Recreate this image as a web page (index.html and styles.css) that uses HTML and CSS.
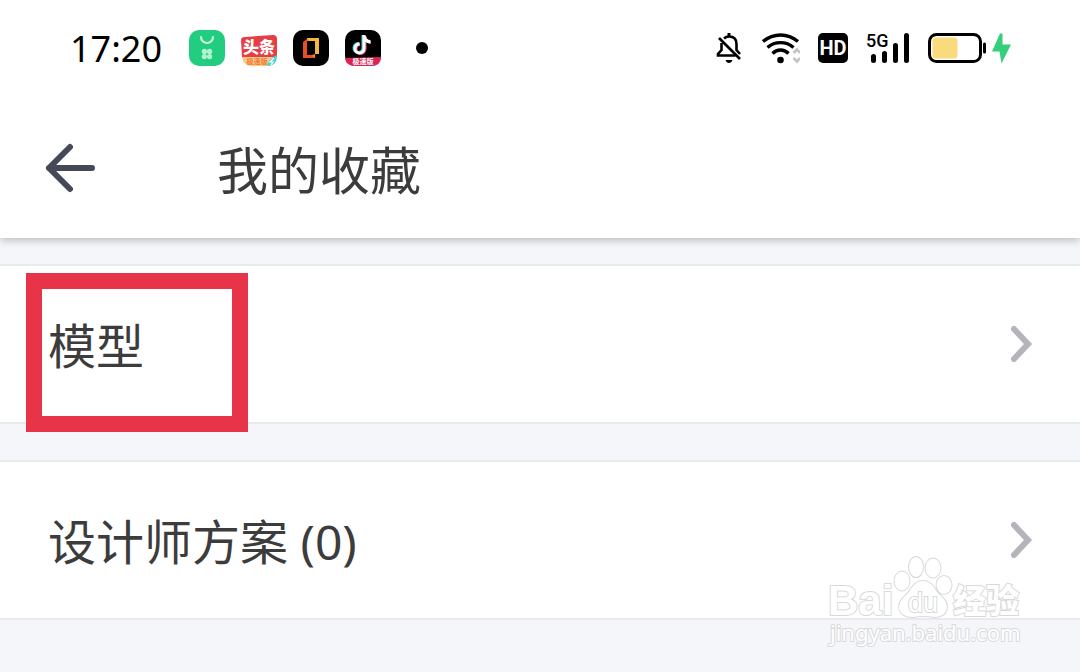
FILE: index.html
```html
<!DOCTYPE html>
<html lang="zh-CN">
<head>
  <meta charset="UTF-8">
  <meta name="viewport" content="width=device-width, initial-scale=1">
  <title>我的收藏</title>
  <link rel="stylesheet" href="styles.css">
</head>
<body>

  <!-- 状态栏 -->
  <div class="status-bar">
    <span class="time">17:20</span>
    <div class="apps">
      <svg width="36" height="36" viewBox="0 0 36 36">
        <rect width="36" height="36" rx="10" fill="#22cd80"/>
        <path d="M12 7a6 6 0 0 0 12 0" fill="none" stroke="#c6f7dc" stroke-width="2.2" stroke-linecap="round"/>
        <g fill="#b5f3d0">
          <circle cx="15.4" cy="21.4" r="2.6"/><circle cx="20.6" cy="21.4" r="2.6"/>
          <circle cx="15.4" cy="26.6" r="2.6"/><circle cx="20.6" cy="26.6" r="2.6"/>
        </g>
      </svg>
      <svg width="36" height="36" viewBox="0 0 36 36">
        <path d="M0 10Q0 7 4 7L32 5Q36 5 36 9V27H1Z" fill="#e63e45"/>
        <path d="M1 27H36Q35 36 26 36H11Q2 36 1 27Z" fill="#fcc887"/>
        <path d="M36 25Q36 36 26 36Q27 29 36 25Z" fill="#43d5d3"/>
        <path d="M33 28L29 32H32L30 35" fill="none" stroke="#fff" stroke-width="1.2"/>
        <text x="18" y="23" class="app-name">头条</text>
        <text x="16" y="34" class="app-tag tag-orange">极速版</text>
      </svg>
      <svg width="36" height="36" viewBox="0 0 36 36">
        <rect width="36" height="36" rx="10" fill="#000"/>
        <path d="M14 8H26V24H22V11H14Z" fill="#f4b63d"/>
        <path d="M10 12L14 9V25H22V28H10Z" fill="#e84f22"/>
        <path d="M14 8L17 11H14ZM22 24V28L19 25Z" fill="#f58a2e"/>
      </svg>
      <svg width="36" height="36" viewBox="0 0 36 36">
        <rect width="36" height="36" rx="10" fill="#000"/>
        <path d="M0 28L36 27Q36 36 26 36H10Q1 36 0 28Z" fill="#dc2454"/>
        <g fill="none" stroke-width="3">
          <path d="M18 5V18A4.500 4.500 0 1 1 14 13.500M18 6Q20 11 25 11.500" stroke="#36d9d5"/>
          <path d="M20 6V19A4.500 4.500 0 1 1 15 14.500M20 7Q21 12 26 12.500" stroke="#e94b72"/>
          <path d="M19 5V18.500A4.500 4.500 0 1 1 14.500 14M19 6Q20.500 11.500 25.500 12" stroke="#fff"/>
        </g>
        <text x="18" y="34" class="app-tag tag-white">极速版</text>
      </svg>
    </div>
    <span class="more-dot"></span>

    <div class="indicators">
      <svg width="26" height="32" viewBox="0 0 26 32">
        <g fill="none" stroke="#000" stroke-width="2.600">
          <path d="M8 6.500Q10 4.500 13 4.500Q20.500 4.500 20.500 12V18L24 22M5.500 11V18L2 22V23.500H19.500"/>
          <path d="M3 6L24 27"/>
        </g>
        <path d="M11.500 1H14.500V5H11.500ZM9.500 28H16.500Q15.500 31 13 31Q10.500 31 9.500 28Z" fill="#000"/>
      </svg>
      <svg width="40" height="32" viewBox="0 0 40 32">
        <g fill="none" stroke="#000" stroke-width="3.400">
          <path d="M3 9.500Q11 3 20.500 3Q30 3 38 9.500"/>
          <path d="M7.500 15.500Q13 10.600 20.500 10.600Q28 10.600 33.500 15.500"/>
          <path d="M12.500 21.500Q16 18 20.500 18Q25 18 28.500 21.500"/>
        </g>
        <circle cx="20.500" cy="28" r="3.300" fill="#000"/>
        <path d="M33.500 21L37 17.500L40 21M33.500 26L37 29.500L40 26" fill="none" stroke="#c4c4c4" stroke-width="2.600"/>
      </svg>
      <span class="hd">HD</span>
      <svg width="44" height="32" viewBox="0 0 44 32">
        <text x="0" y="15" class="network">5G</text>
        <g stroke="#000" stroke-width="5" stroke-linecap="round">
          <path d="M7.500 24.500V28.500M18.500 21.500V28.500M29.500 13.500V28.500M40.500 3.500V28.500"/>
        </g>
      </svg>
      <svg width="84" height="32" viewBox="0 0 84 32">
        <rect x="1.500" y="2.500" width="51" height="27" rx="7" fill="#fff" stroke="#000" stroke-width="3"/>
        <rect x="4.500" y="5.500" width="25" height="21" rx="3.500" fill="#f9da7c"/>
        <path d="M56.500 12V20" stroke="#000" stroke-width="3" stroke-linecap="round"/>
        <path d="M72 1.500L64 19.500H71.500L73.500 31.500L83 12.500H74.500V1.500Z" fill="#35cf7c"/>
      </svg>
    </div>
  </div>

  <!-- 标题栏 -->
  <header>
    <button class="back" type="button" aria-label="返回">
      <svg width="52" height="50" viewBox="0 0 52 50">
        <path d="M25 4L4 25L25 46M4 25H47" fill="none" stroke="#444859" stroke-width="6" stroke-linecap="round" stroke-linejoin="round"/>
      </svg>
    </button>
    <h1>我的收藏</h1>
  </header>

  <!-- 收藏列表 -->
  <main>
    <a class="row" href="#">
      <span class="label">模型</span>
      <svg class="chevron" width="24" height="40" viewBox="0 0 24 40">
        <path d="M5 5L19 20L5 35" fill="none" stroke="#b4b5bb" stroke-width="6" stroke-linecap="round"/>
      </svg>
      <span class="highlight"></span>
    </a>
    <a class="row" href="#">
      <span class="label">设计师方案 (0)</span>
      <svg class="chevron" width="24" height="40" viewBox="0 0 24 40">
        <path d="M5 5L19 20L5 35" fill="none" stroke="#b4b5bb" stroke-width="6" stroke-linecap="round"/>
      </svg>
      <!-- 水印 -->
      <svg class="watermark" width="200" height="96" viewBox="0 0 200 96">
        <g class="mark">
          <text x="3" y="60" class="mark-bai">Bai</text>
          <ellipse cx="77" cy="26" rx="7.500" ry="9.500"/>
          <ellipse cx="91" cy="12" rx="7" ry="10"/>
          <ellipse cx="108" cy="13" rx="7.500" ry="9.500"/>
          <ellipse cx="119" cy="30" rx="7.500" ry="9"/>
          <path d="M98 26C108 26 109 35 116 41C126 50 123 62 109 62Q98 60 88 62C73 62 70 50 80 41C87 35 88 26 98 26Z"/>
          <text x="83" y="57" class="mark-du">du</text>
          <text x="128" y="58" class="mark-cn">经验</text>
          <text x="5" y="86" class="mark-url">jingyan.baidu.com</text>
        </g>
      </svg>
    </a>
  </main>

</body>
</html>
```
FILE: styles.css
```css
* {
  box-sizing: border-box;
  margin: 0;
  padding: 0;
}

body {
  min-height: 100vh;
  background: #f5f6fa;
  color: #3c3c3c;
  font-family: "Noto Sans", "Noto Sans CJK SC", sans-serif;
}

/* 状态栏 */
.status-bar {
  position: relative;
  z-index: 1;
  display: flex;
  align-items: center;
  height: 96px;
  padding: 0 68px 0 70px;
  background: #fff;
}

.time {
  width: 119px;
  padding-top: 2px;
  font-size: 36px;
  line-height: 48px;
  color: #000;
}

.apps {
  display: flex;
  gap: 16px;
}

.app-name {
  font: 900 16px "Noto Sans CJK SC", sans-serif;
  fill: #fff;
  text-anchor: middle;
}

.app-tag {
  font: 700 7px "Noto Sans CJK SC", sans-serif;
  text-anchor: middle;
}

.tag-orange {
  fill: #ef7a35;
}

.tag-white {
  fill: #fff;
}

.more-dot {
  width: 12px;
  height: 12px;
  margin-left: 35px;
  border-radius: 50%;
  background: #000;
}

.indicators {
  display: flex;
  align-items: center;
  gap: 18px;
  margin-left: auto;
}

.hd {
  width: 30px;
  height: 30px;
  border-radius: 5px;
  background: #000;
  color: #fff;
  font: 700 20px/30px "Roboto", sans-serif;
  text-align: center;
}

.network {
  font: 500 18px "Roboto", sans-serif;
}

/* 标题栏 */
header {
  display: flex;
  align-items: center;
  height: 142px;
  padding: 2px 45px 0 45px;
  background: #fff;
  box-shadow: 0 2px 8px rgba(0, 0, 0, 0.25);
}

.back {
  display: flex;
  width: 172px;
  border: none;
  background: none;
  cursor: pointer;
}

h1 {
  font-family: "Noto Sans CJK SC", sans-serif;
  font-size: 51px;
  font-weight: 400;
  line-height: 72px;
}

/* 列表 */
main {
  display: flex;
  flex-direction: column;
  gap: 36px;
  padding-top: 26px;
}

.row {
  position: relative;
  display: flex;
  align-items: center;
  justify-content: space-between;
  height: 160px;
  padding: 0 47px 0 48px;
  border-top: 2px solid #e9eaec;
  border-bottom: 2px solid #e9eaec;
  background: #fff;
  color: inherit;
  text-decoration: none;
}

.label {
  padding-top: 4px;
  font-size: 48px;
  line-height: 64px;
}

/* 红色标记框 */
.highlight {
  position: absolute;
  top: 7px;
  left: 26px;
  width: 222px;
  height: 159px;
  border: 16px solid #e83448;
  z-index: 1;
}

/* 水印 */
.watermark {
  position: absolute;
  top: 93px;
  right: 55px;
}

.mark {
  fill: #fff;
  stroke: #d9d9dc;
  stroke-width: 2px;
  paint-order: stroke;
}

.mark-bai {
  font: 700 42px "Liberation Sans", sans-serif;
}

.mark-du {
  font: 400 27px "Liberation Sans", sans-serif;
}

.mark-cn {
  font: 900 33px "Noto Sans CJK SC", sans-serif;
}

.mark-url {
  font: 400 22px "Noto Sans", sans-serif;
}
```
